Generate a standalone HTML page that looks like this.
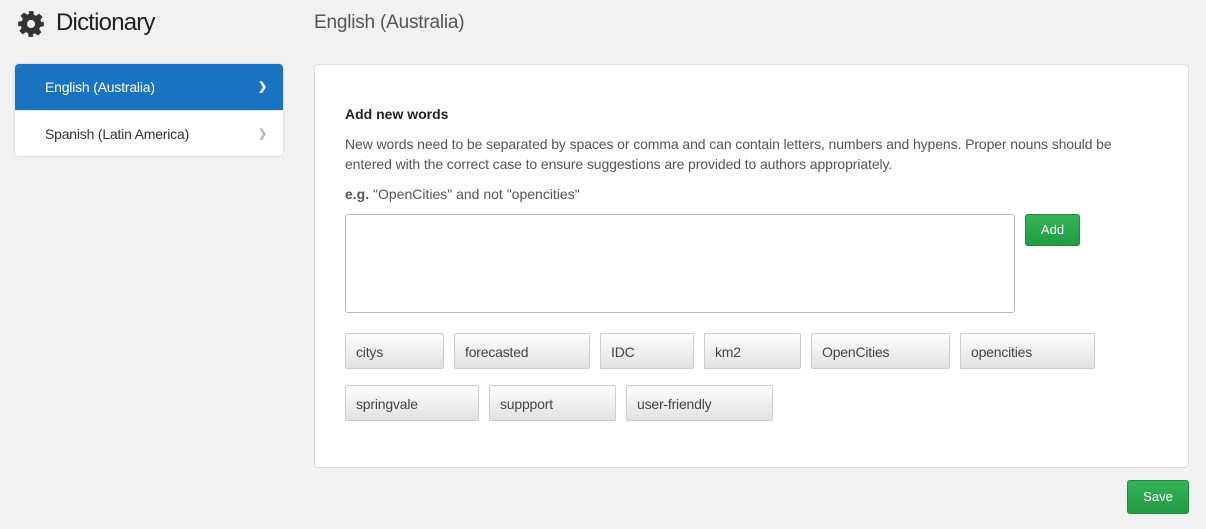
<!DOCTYPE html>
<html><head><style>
body{margin:0;width:1206px;height:529px;background:#f1f1f1;font-family:"Liberation Sans",sans-serif;position:relative;overflow:hidden;color:#333}
.a{position:absolute}
.h1{left:56px;top:9px;font-size:24px;color:#222;letter-spacing:-0.8px}
.h2{left:314px;top:12px;font-size:19px;color:#555;letter-spacing:-0.2px}
.nav{left:15px;top:64px;width:268px;height:92px;background:#fff;border-radius:4px;box-shadow:0 0 2px rgba(0,0,0,.2);overflow:hidden}
.nav div{height:46px;line-height:46px;padding-left:30px;font-size:14px;position:relative;letter-spacing:-0.2px}
.nav .act{background:#1a73c0;color:#fff}
.chev{position:absolute;right:16px;top:0;font-weight:bold;font-size:11px}
.panel{left:314px;top:64px;width:873px;height:402px;background:#fff;border:1px solid #ddd;border-radius:4px}
.tag{position:absolute;height:36px;line-height:36px;border:1px solid #ccc;border-radius:2px;background:linear-gradient(#fdfdfd,#e2e2e2);font-size:14px;padding-left:10px;box-sizing:border-box;color:#444;letter-spacing:-0.2px}
.btn{position:absolute;background:linear-gradient(#34b55a,#239a42);border:1px solid #1e8a3b;border-radius:3px;color:#fff;font-size:13px;text-align:center;box-sizing:border-box}
</style></head><body>
<svg class="a" style="left:17px;top:10px" width="28" height="28" viewBox="0 0 24 24"><path fill="#333" d="M10 1h4l.5 3.2 1.9.8 2.7-1.9 2.8 2.8-1.9 2.7.8 1.9L23 10v4l-3.2.5-.8 1.9 1.9 2.7-2.8 2.8-2.7-1.9-1.9.8L14 23h-4l-.5-3.2-1.9-.8-2.7 1.9-2.8-2.8 1.9-2.7-.8-1.9L1 14v-4l3.2-.5.8-1.9L3.1 4.9l2.8-2.8 2.7 1.9 1.9-.8zM12 8.5a3.5 3.5 0 1 0 0 7 3.5 3.5 0 0 0 0-7z"/></svg>
<div class="a h1">Dictionary</div>
<div class="a h2">English (Australia)</div>
<div class="a nav"><div class="act">English (Australia)<span class="chev">&#x276F;</span></div><div style="border-top:1px solid #e5e5e5">Spanish (Latin America)<span class="chev" style="color:#bbb">&#x276F;</span></div></div>
<div class="a panel"></div>
<div class="a" style="left:345px;top:106px;font-size:14px;font-weight:bold;color:#222">Add new words</div>
<div class="a" style="left:345px;top:134px;width:795px;font-size:14px;line-height:20px;color:#555;letter-spacing:-0.1px">New words need to be separated by spaces or comma and can contain letters, numbers and hypens. Proper nouns should be entered with the correct case to ensure suggestions are provided to authors appropriately.</div>
<div class="a" style="left:345px;top:186px;font-size:14px;color:#555"><b>e.g.</b> "OpenCities" and not "opencities"</div>
<div class="a" style="left:345px;top:214px;width:670px;height:99px;border:1px solid #bbb;border-radius:3px;box-sizing:border-box;background:#fff"></div>
<div class="btn" style="left:1025px;top:214px;width:55px;height:32px;line-height:30px">Add</div>
<div class="tag" style="left:345px;top:333px;width:99px">citys</div>
<div class="tag" style="left:454px;top:333px;width:136px">forecasted</div>
<div class="tag" style="left:600px;top:333px;width:94px">IDC</div>
<div class="tag" style="left:704px;top:333px;width:97px">km2</div>
<div class="tag" style="left:811px;top:333px;width:139px">OpenCities</div>
<div class="tag" style="left:960px;top:333px;width:135px">opencities</div>
<div class="tag" style="left:345px;top:385px;width:134px">springvale</div>
<div class="tag" style="left:489px;top:385px;width:127px">suppport</div>
<div class="tag" style="left:626px;top:385px;width:147px">user-friendly</div>
<div class="btn" style="left:1127px;top:480px;width:62px;height:34px;line-height:32px">Save</div>
</body></html>
